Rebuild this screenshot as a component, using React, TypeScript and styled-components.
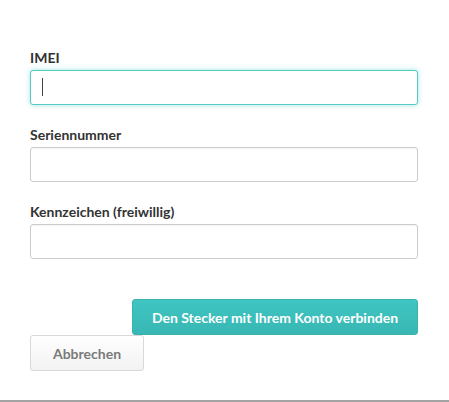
import React from 'react';
import styled, { createGlobalStyle, css } from 'styled-components';

const GlobalStyle = createGlobalStyle`
  html, body {
    margin: 0;
    padding: 0;
    background: #ffffff;
  }
  body {
    font-family: Lato, "Open Sans", "Liberation Sans", sans-serif;
  }
`;

const Panel = styled.div`
  box-sizing: border-box;
  width: 449px;
  height: 402px;
  padding: 48px 31px 0 30px;
  border-bottom: 2px solid #a3a3a3;
  display: flex;
  flex-direction: column;
`;

const Field = styled.div`
  display: flex;
  flex-direction: column;
  margin-bottom: 20px;
`;

const Label = styled.label`
  font-size: 14px;
  font-weight: 700;
  line-height: 20px;
  color: #333333;
  margin-bottom: 2px;
`;

const InputWrap = styled.div`
  position: relative;
`;

const Input = styled.input<{ $focused?: boolean }>`
  box-sizing: border-box;
  width: 100%;
  height: 35px;
  padding: 0 12px;
  font-family: inherit;
  font-size: 14px;
  color: #333;
  background: #fff;
  border: 1px solid #cccccc;
  border-radius: 3px;
  outline: none;
  box-shadow: inset 0 1px 1px rgba(0, 0, 0, 0.04);
  ${(p) =>
    p.$focused &&
    css`
      border-color: #52cbc7;
      box-shadow: 0 0 5px rgba(82, 203, 199, 0.55);
    `}
`;

const Caret = styled.span`
  position: absolute;
  left: 12px;
  top: 8px;
  width: 1px;
  height: 18px;
  background: #444;
`;

const Actions = styled.div`
  display: flex;
  flex-direction: column;
  margin-top: 20px;
`;

const PrimaryButton = styled.button`
  align-self: flex-end;
  height: 36px;
  width: 286px;
  border: 1px solid #37b3b0;
  border-radius: 3px;
  background: linear-gradient(#40c5c2, #38b7b4);
  color: #ffffff;
  font-family: inherit;
  font-size: 14px;
  font-weight: 700;
  cursor: pointer;
`;

const SecondaryButton = styled.button`
  align-self: flex-start;
  height: 36px;
  width: 114px;
  border: 1px solid #d9d9d9;
  border-radius: 3px;
  background: linear-gradient(#ffffff, #f2f2f2);
  color: #7a7a7a;
  font-family: inherit;
  font-size: 14px;
  font-weight: 700;
  cursor: pointer;
`;

const fields = [
  { id: 'imei', label: 'IMEI', focused: true },
  { id: 'serial', label: 'Seriennummer' },
  { id: 'plate', label: 'Kennzeichen (freiwillig)' },
];

export default function App() {
  return (
    <>
      <GlobalStyle />
      <Panel>
        {fields.map((f) => (
          <Field key={f.id}>
            <Label htmlFor={f.id}>{f.label}</Label>
            <InputWrap>
              <Input id={f.id} $focused={f.focused} />
              {f.focused && <Caret />}
            </InputWrap>
          </Field>
        ))}
        <Actions>
          <PrimaryButton>Den Stecker mit Ihrem Konto verbinden</PrimaryButton>
          <SecondaryButton>Abbrechen</SecondaryButton>
        </Actions>
      </Panel>
    </>
  );
}
